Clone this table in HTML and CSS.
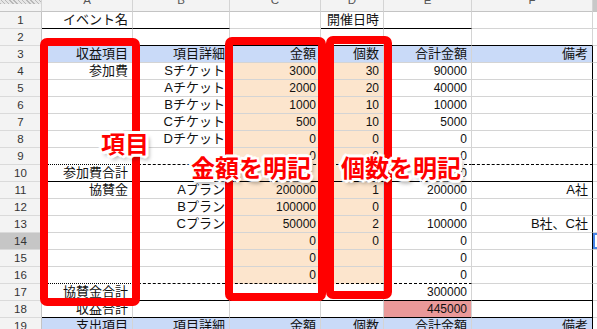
FILE: index.html
```html
<!DOCTYPE html>
<html lang="ja">
<head>
<meta charset="utf-8">
<title>収益表</title>
<link rel="stylesheet" href="styles.css">
</head>
<body>
<div class="sheet">
  <div class="row head">
    <div class="corner"></div>
    <div><span>A</span></div><div><span>B</span></div><div><span>C</span></div><div><span>D</span></div><div><span>E</span></div><div><span>F</span></div><div class="gsel"><span>G</span></div>
  </div>
  <div class="row">
    <div class="rh">1</div><div class="j bb">イベント名</div><div class="bb"></div><div></div><div class="j bb">開催日時</div><div class="bb"></div><div></div><div></div>
  </div>
  <div class="row">
    <div class="rh">2</div><div class="bb"></div><div class="bb"></div><div class="bb"></div><div class="bb"></div><div class="bb"></div><div class="bb"></div><div></div>
  </div>
  <div class="row">
    <div class="rh">3</div><div class="j blue">収益項目</div><div class="j blue">項目詳細</div><div class="j blue">金額</div><div class="j blue">個数</div><div class="j blue">合計金額</div><div class="j blue br">備考</div><div></div>
  </div>
  <div class="row">
    <div class="rh">4</div><div class="j">参加費</div><div class="j">Sチケット</div><div class="peach">3000</div><div class="peach">30</div><div>90000</div><div class="br"></div><div></div>
  </div>
  <div class="row">
    <div class="rh">5</div><div></div><div class="j">Aチケット</div><div class="peach">2000</div><div class="peach">20</div><div>40000</div><div class="br"></div><div></div>
  </div>
  <div class="row">
    <div class="rh">6</div><div></div><div class="j">Bチケット</div><div class="peach">1000</div><div class="peach">10</div><div>10000</div><div class="br"></div><div></div>
  </div>
  <div class="row">
    <div class="rh">7</div><div></div><div class="j">Cチケット</div><div class="peach">500</div><div class="peach">10</div><div>5000</div><div class="br"></div><div></div>
  </div>
  <div class="row">
    <div class="rh">8</div><div></div><div class="j">Dチケット</div><div class="peach">0</div><div class="peach">0</div><div>0</div><div class="br"></div><div></div>
  </div>
  <div class="row">
    <div class="rh">9</div><div class="bt"></div><div class="bd"></div><div class="peach bd">0</div><div class="peach bd">0</div><div class="bd">0</div><div class="br bd"></div><div></div>
  </div>
  <div class="row">
    <div class="rh">10</div><div class="j bb">参加費合計</div><div class="bb"></div><div class="peach bb"></div><div class="peach bb"></div><div class="bb">145000</div><div class="br bb"></div><div></div>
  </div>
  <div class="row">
    <div class="rh">11</div><div class="j">協賛金</div><div class="j">Aプラン</div><div class="peach">200000</div><div class="peach">1</div><div>200000</div><div class="j br">A社</div><div></div>
  </div>
  <div class="row">
    <div class="rh">12</div><div></div><div class="j">Bプラン</div><div class="peach">100000</div><div class="peach">0</div><div>0</div><div class="br"></div><div></div>
  </div>
  <div class="row">
    <div class="rh">13</div><div></div><div class="j">Cプラン</div><div class="peach">50000</div><div class="peach">2</div><div>100000</div><div class="j br">B社、C社</div><div></div>
  </div>
  <div class="row">
    <div class="rh rsel">14</div><div></div><div></div><div class="peach">0</div><div class="peach">0</div><div>0</div><div class="br"></div><div class="sel"></div>
  </div>
  <div class="row">
    <div class="rh">15</div><div></div><div></div><div class="peach">0</div><div class="peach"></div><div>0</div><div class="br"></div><div></div>
  </div>
  <div class="row">
    <div class="rh">16</div><div class="bt"></div><div class="bd"></div><div class="peach bd">0</div><div class="peach bd"></div><div class="bd">0</div><div class="br"></div><div></div>
  </div>
  <div class="row">
    <div class="rh">17</div><div class="j bb">協賛金合計</div><div class="bb"></div><div class="bb"></div><div class="bb"></div><div class="bb">300000</div><div class="br bb"></div><div></div>
  </div>
  <div class="row">
    <div class="rh">18</div><div class="j bb">収益合計</div><div class="bb"></div><div class="bb"></div><div class="bb"></div><div class="pink bb">445000</div><div class="br bb"></div><div></div>
  </div>
  <div class="row">
    <div class="rh">19</div><div class="j blue">支出項目</div><div class="j blue">項目詳細</div><div class="j blue">金額</div><div class="j blue">個数</div><div class="j blue">合計金額</div><div class="j blue br">備考</div><div></div>
  </div>

  <div class="box box-a"></div>
  <div class="box box-c"></div>
  <div class="box box-d"></div>
  <div class="label l1">項目</div>
  <div class="label l2">金額を明記</div>
  <div class="label l3">個数を明記</div>
</div>
</body>
</html>
```
FILE: styles.css
```css
html, body {
  margin: 0;
  padding: 0;
}
body {
  width: 597px;
  height: 329px;
  overflow: hidden;
  background: #fff;
  font-family: "Liberation Sans", "Noto Sans CJK JP", sans-serif;
  font-size: 12px;
  color: #111;
}
.sheet {
  position: relative;
  width: 597px;
  height: 329px;
  overflow: hidden;
}
.row {
  display: grid;
  grid-template-columns: 42px 91px 97px 91px 63px 88px 121px 60px;
  height: 17px;
}
.row > div {
  box-sizing: border-box;
  border-right: 1px solid #d4d4d4;
  border-bottom: 1px solid #d4d4d4;
  text-align: right;
  padding-right: 4px;
  line-height: 16px;
  white-space: nowrap;
  overflow: hidden;
}
.row > .rh {
  background: #f3f3f3;
  text-align: center;
  padding: 0;
  font-size: 11.5px;
  color: #333;
  border-right-color: #c4c4c4;
  border-bottom-color: #dadada;
}
.row > .rsel {
  background: #c6c6c6;
}
.head {
  height: 12px;
}
.head > div {
  background: #f3f3f3;
  text-align: center;
  padding: 0;
  color: #555;
  font-size: 11.5px;
  border-bottom-color: #c4c4c4;
}
.head > div span {
  display: block;
  margin-top: -8px;
}
.head > .corner {
  background: repeating-linear-gradient(45deg, #b8b8b8 0 1px, #e6e6e6 1px 3px) top left / 100% 4px no-repeat, #f3f3f3;
}
.head > .gsel {
  background: #c8c8c8;
}
.row > .j {
  font-size: 13px;
}
.row > .bb {
  border-bottom: 1px solid #000;
}
.row > .bd {
  border-bottom: 1px dashed #000;
}
.row > .bt {
  border-bottom: 1px dotted #000;
}
.row > .br {
  border-right: 1px solid #000;
}
.row > .blue {
  background: #c9daf8;
}
.row > .peach {
  background: #fce5cd;
}
.row > .pink {
  background: #ea9999;
}
.row > .sel {
  box-shadow: inset 2px 2px 0 #4a86e8, inset 0 -2px 0 #4a86e8;
}

.box {
  position: absolute;
  box-sizing: border-box;
  border: 8px solid #ff0000;
  border-radius: 7px;
}
.box-a {
  left: 40px;
  top: 38px;
  width: 100px;
  height: 268px;
}
.box-c {
  left: 225px;
  top: 37px;
  width: 101px;
  height: 264px;
}
.box-d {
  left: 326px;
  top: 36px;
  width: 66px;
  height: 263px;
}
.label {
  position: absolute;
  font-family: "Noto Sans CJK JP", sans-serif;
  font-weight: 700;
  font-size: 24px;
  line-height: 1;
  color: #ff0000;
  white-space: nowrap;
  text-shadow:
    -2px -2px 0 #fff, 0 -2px 0 #fff, 2px -2px 0 #fff, 2px 0 0 #fff,
    2px 2px 0 #fff, 0 2px 0 #fff, -2px 2px 0 #fff, -2px 0 0 #fff,
    -1px -3px 0 #fff, 1px 3px 0 #fff, 3px 1px 0 #fff, -3px -1px 0 #fff,
    3px 4px 4px rgba(0, 0, 0, 0.45);
}
.l1 {
  left: 101px;
  top: 131px;
}
.l2 {
  left: 191px;
  top: 155px;
}
.l3 {
  left: 341px;
  top: 155px;
}
```
